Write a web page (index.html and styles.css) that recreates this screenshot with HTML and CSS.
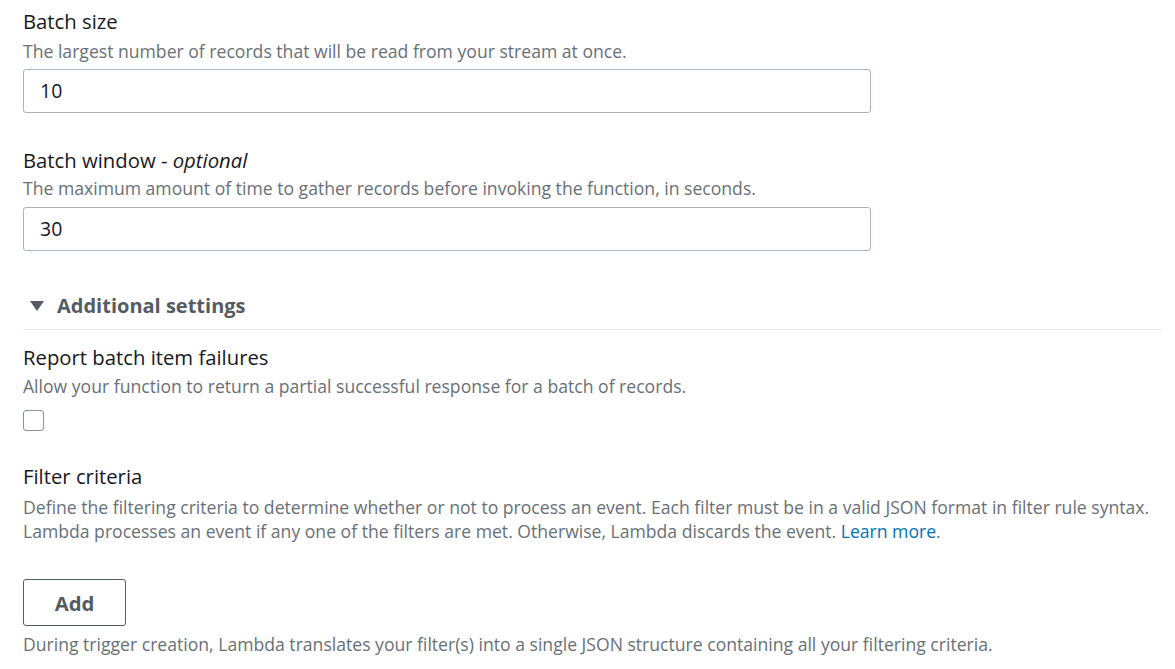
FILE: index.html
```html
<!DOCTYPE html>
<html>
<head>
<meta charset="utf-8">
<link rel="stylesheet" href="styles.css">
</head>
<body>
<div class="page">
  <div class="field">
    <div class="label">Batch size</div>
    <div class="desc">The largest number of records that will be read from your stream at once.</div>
    <div class="input">10</div>
  </div>
  <div class="field f2">
    <div class="label">Batch window - <i>optional</i></div>
    <div class="desc d2">The maximum amount of time to gather records before invoking the function, in seconds.</div>
    <div class="input i2">30</div>
  </div>
  <div class="section">
    <svg class="caret" width="16" height="12" viewBox="0 0 16 12"><polygon points="1,1 15,1 8,11" fill="#545b64"/></svg>
    <span>Additional settings</span>
  </div>
  <div class="field f3">
    <div class="label">Report batch item failures</div>
    <div class="desc d3">Allow your function to return a partial successful response for a batch of records.</div>
    <div class="checkbox"></div>
  </div>
  <div class="field f4">
    <div class="label">Filter criteria</div>
    <div class="desc d4">Define the filtering criteria to determine whether or not to process an event. Each filter must be in a valid JSON format in filter rule syntax.<br>Lambda processes an event if any one of the filters are met. Otherwise, Lambda discards the event. <a href="#">Learn more</a>.</div>
  </div>
  <div class="button">Add</div>
  <div class="desc foot">During trigger creation, Lambda translates your filter(s) into a single JSON structure containing all your filtering criteria.</div>
</div>
</body>
</html>
```
FILE: styles.css
```css
html, body { margin: 0; padding: 0; background: #fff; }
body { font-family: "Open Sans", "Noto Sans", sans-serif; color: #16191f; }
.page { padding: 6px 13px 0 23px; }
.label { font-size: 20.3px; line-height: 30px; color: #16191f; }
.desc { font-size: 17.6px; line-height: 24px; color: #687078; margin-top: 3px; }
.input { margin-top: 6px; height: 44px; width: 848px; box-sizing: border-box; border: 1px solid #aab7b8; border-radius: 3px; font-size: 19.5px; line-height: 42px; padding-left: 16px; color: #16191f; }
.f2 { margin-top: 32px; }
.d2 { margin-top: 1px; }
.i2 { margin-top: 7px; }
.section { margin-top: 41px; display: flex; align-items: center; font-weight: 700; font-size: 20px; line-height: 28px; color: #545b64; padding-bottom: 9px; border-bottom: 1px solid #eaeded; }
.caret { margin-left: 6px; margin-right: 12px; }
.f3 { margin-top: 12px; }
.d3 { margin-top: 2px; }
.checkbox { margin-top: 12px; width: 19px; height: 19px; border: 1px solid #879596; border-radius: 3px; }
.f4 { margin-top: 30px; }
.d4 { margin-top: 4px; }
a { color: #0073bb; text-decoration: none; }
.button { margin-top: 36px; width: 103px; height: 47px; box-sizing: border-box; border: 1px solid #545b64; border-radius: 3px; display: flex; align-items: center; justify-content: center; font-weight: 700; font-size: 20.3px; color: #545b64; }
.foot { margin-top: 6px; }
```
